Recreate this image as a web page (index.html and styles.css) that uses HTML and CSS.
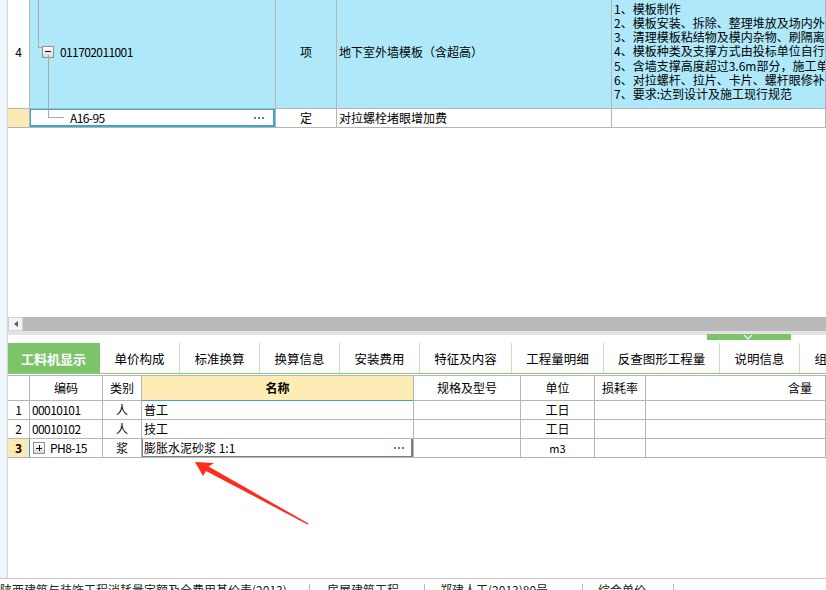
FILE: index.html
```html
<!DOCTYPE html>
<html lang="zh-CN">
<head>
<meta charset="utf-8">
<title>工料机显示</title>
<link rel="stylesheet" href="styles.css">
</head>
<body>
<div class="app">
  <div class="main">
    <div class="side"></div>
    <div class="content">
      <div class="top-pane">
        <div class="grid-top">
          <div class="trow r-main">
            <div class="cell num">4</div>
            <div class="cell code">
              <span class="tree-up"></span>
              <span class="toggle minus"></span>
              <span class="tree-down"></span>
              <span class="codetext">011702011001</span>
            </div>
            <div class="cell center">项</div>
            <div class="cell name">地下室外墙模板（含超高）</div>
            <div class="cell desc">
              <div class="desc-lines">
                <div>1、模板制作</div>
                <div>2、模板安装、拆除、整理堆放及场内外运输</div>
                <div>3、清理模板粘结物及模内杂物、刷隔离剂等</div>
                <div>4、模板种类及支撑方式由投标单位自行确定</div>
                <div>5、含墙支撑高度超过3.6m部分，施工单位自行考虑</div>
                <div>6、对拉螺杆、拉片、卡片、螺杆眼修补等</div>
                <div>7、要求:达到设计及施工现行规范</div>
              </div>
            </div>
          </div>
          <div class="trow r-sub">
            <div class="cell num hl"></div>
            <div class="cell code sel">
              <span class="tree-elbow"></span>
              <span class="codetext">A16-95</span>
              <svg class="more" width="12" height="3" viewBox="0 0 12 3"><rect x="0" y="0" width="2" height="2"/><rect x="4" y="0" width="2" height="2"/><rect x="8" y="0" width="2" height="2"/></svg>
            </div>
            <div class="cell center">定</div>
            <div class="cell name">对拉螺栓堵眼增加费</div>
            <div class="cell desc"></div>
          </div>
        </div>
      </div>

      <div class="hscroll">
        <div class="sbtn"><span class="tri"></span></div>
        <div class="sthumb"></div>
      </div>

      <div class="split">
        <div class="handle">
          <svg width="10" height="6" viewBox="0 0 10 6"><polyline points="1,1 5,5 9,1" fill="none" stroke="#fff" stroke-width="1.2"/></svg>
        </div>
      </div>

      <div class="tabs">
        <div class="tab active w92">工料机显示</div>
        <div class="tab w80">单价构成</div>
        <div class="tab w80">标准换算</div>
        <div class="tab w80">换算信息</div>
        <div class="tab w80">安装费用</div>
        <div class="tab w92">特征及内容</div>
        <div class="tab w92">工程量明细</div>
        <div class="tab w116">反查图形工程量</div>
        <div class="tab w80">说明信息</div>
        <div class="tab w80">组价方案</div>
      </div>

      <div class="grid-bot">
        <div class="brow head">
          <div class="cell"></div>
          <div class="cell center">编码</div>
          <div class="cell center">类别</div>
          <div class="cell center hname">名称</div>
          <div class="cell center">规格及型号</div>
          <div class="cell center">单位</div>
          <div class="cell center">损耗率</div>
          <div class="cell right">含量</div>
        </div>
        <div class="brow">
          <div class="cell center">1</div>
          <div class="cell lcode"><span class="codetext">00010101</span></div>
          <div class="cell center">人</div>
          <div class="cell lname">普工</div>
          <div class="cell"></div>
          <div class="cell center">工日</div>
          <div class="cell"></div>
          <div class="cell"></div>
        </div>
        <div class="brow">
          <div class="cell center">2</div>
          <div class="cell lcode"><span class="codetext">00010102</span></div>
          <div class="cell center">人</div>
          <div class="cell lname">技工</div>
          <div class="cell"></div>
          <div class="cell center">工日</div>
          <div class="cell"></div>
          <div class="cell"></div>
        </div>
        <div class="brow cur">
          <div class="cell center curnum">3</div>
          <div class="cell lcode"><span class="toggle plus"></span><span class="codetext">PH8-15</span></div>
          <div class="cell center">浆</div>
          <div class="cell lname edit">膨胀水泥砂浆 1:1<svg class="more" width="12" height="3" viewBox="0 0 12 3"><rect x="0" y="0" width="2" height="2"/><rect x="4" y="0" width="2" height="2"/><rect x="8" y="0" width="2" height="2"/></svg></div>
          <div class="cell"></div>
          <div class="cell center small">m3</div>
          <div class="cell"></div>
          <div class="cell"></div>
        </div>
      </div>
    </div>
  </div>

  <div class="status">
    <div class="sitem s1">陕西建筑与装饰工程消耗量定额及全费用基价表(2013)</div>
    <div class="sitem s2">房屋建筑工程</div>
    <div class="sitem s3">郑建人工(2013)80号</div>
    <div class="sitem s4">综合单价</div>
    <div class="sitem s5"></div>
  </div>
</div>

<svg class="arrow" width="826" height="590" viewBox="0 0 826 590">
  <polygon points="195,462 214,463 208.5,466.5 308.5,523.5 307.5,524.5 206,471 203,476" fill="#ff2b1c"/>
</svg>
</body>
</html>
```

FILE: styles.css
```css
* { box-sizing: border-box; }
html, body { margin: 0; padding: 0; }
body {
  width: 826px;
  height: 590px;
  overflow: hidden;
  background: #fff;
  font-family: "Noto Sans CJK SC", "Noto Sans", sans-serif;
  font-size: 12px;
  color: #000;
  position: relative;
}
.app { display: flex; flex-direction: column; height: 590px; }
.main { flex: 1; display: flex; min-height: 0; }
.side {
  width: 8px;
  flex: none;
  background: #eff7fb;
  border-right: 1px solid #d6d6d6;
}
.content {
  flex: 1;
  min-width: 0;
  display: flex;
  flex-direction: column;
  position: relative;
  overflow: hidden;
}

/* generic cells */
.cell {
  border-right: 1px solid #b5b5b5;
  border-bottom: 1px solid #b5b5b5;
  display: flex;
  align-items: center;
  white-space: nowrap;
  overflow: hidden;
  line-height: 14px;
}
.center { justify-content: center; }
.right { justify-content: flex-end; padding-right: 13px; }
.codetext { letter-spacing: -0.6px; }

/* top grid */
.top-pane { height: 317px; flex: none; overflow: hidden; }
.grid-top { margin-top: -5px; }
.trow {
  display: grid;
  grid-template-columns: 22px 246px 61px 275px 1fr;
}
.r-main { height: 114px; }
.r-main .cell { background: #aee8f9; }
.r-main .cell.num { background: #fff; }
.r-sub { height: 19px; }
.num { justify-content: center; }
.hl { background: #fde9b3; }
.name { padding-left: 2px; }
.desc { padding-left: 2px; align-items: center; }
.desc-lines { line-height: 14.2px; }

.code { position: relative; padding-left: 12px; }
.r-main .code .codetext { margin-left: 6px; }
.tree-up {
  position: absolute;
  left: 8px; top: 0;
  width: 1px; height: 53px;
  background: #a9a9a9;
}
.tree-up::after {
  content: "";
  position: absolute;
  left: 0; bottom: 0;
  width: 4px; height: 1px;
  background: #a9a9a9;
}
.tree-down {
  position: absolute;
  left: 18px; top: 60px; bottom: 0;
  width: 1px;
  background: #a9a9a9;
}
.toggle {
  position: relative;
  display: inline-block;
  flex: none;
  width: 12px; height: 12px;
  border: 1px solid #8f8f8f;
  background: linear-gradient(#ffffff, #d9d9d9);
}
.toggle::before {
  content: "";
  position: absolute;
  left: 2px; top: 4.5px;
  width: 6px; height: 1px;
  background: #111;
}
.plus::after {
  content: "";
  position: absolute;
  left: 4.5px; top: 2px;
  width: 1px; height: 6px;
  background: #111;
}
.sel { padding-left: 40px; }
.sel::after {
  content: "";
  position: absolute;
  left: -1px; top: -1px; right: 0; bottom: 0;
  border: 2px solid #3aa6d8;
}
.tree-elbow {
  position: absolute;
  left: 18px; top: 0;
  width: 16px; height: 9px;
  border-left: 1px solid #a9a9a9;
  border-bottom: 1px solid #a9a9a9;
}
.more { fill: #3a86d0; flex: none; margin-left: auto; }
.sel .more { margin-right: 9px; }

/* scrollbar */
.hscroll { height: 14px; flex: none; display: flex; }
.sbtn {
  width: 15px;
  background: #f4f4f4;
  border: 1px solid #d0d0d0;
  display: flex;
  align-items: center;
  justify-content: center;
}
.tri {
  width: 0; height: 0;
  border-top: 3.5px solid transparent;
  border-bottom: 3.5px solid transparent;
  border-right: 4px solid #5a5a66;
}
.sthumb { flex: 1; background: #b9b9b9; }

.split {
  height: 12px;
  flex: none;
  border-top: 4px solid #e3e3e3;
  position: relative;
}
.handle {
  position: absolute;
  left: 699px; top: -1px;
  width: 84px; height: 6px;
  background: #7dc36a;
  display: flex;
  justify-content: center;
  align-items: flex-start;
}
.handle svg { margin-left: -2px; }

/* tabs */
.tabs {
  height: 31px;
  flex: none;
  display: flex;
  border-bottom: 1px solid #8ccd78;
  margin-bottom: 1px;
}
.tab {
  flex: none;
  display: flex;
  align-items: center;
  justify-content: center;
  border-right: 1px solid #c3e5b5;
  font-size: 12.5px;
  white-space: nowrap;
}
.tab.active {
  background: #7dc36a;
  border-right-color: #7dc36a;
  color: #fff;
  font-weight: bold;
  font-size: 13px;
}
.w92 { width: 92px; }
.w80 { width: 80px; }
.w116 { width: 116px; }

/* bottom grid */
.grid-bot { border-top: 1px solid #b5b5b5; }
.brow {
  display: grid;
  grid-template-columns: 22px 73px 39px 272px 107px 74px 51px 1fr;
  height: 19px;
}
.brow.head { height: 25px; }
.hname {
  background: #feecb5;
  font-weight: bold;
  border-bottom-color: #3aa6d8;
}
.lcode { padding-left: 2px; }
.lname { padding-left: 2px; position: relative; }
.cur .lcode { padding-left: 3px; }
.cur .lcode .codetext { margin-left: 5px; }
.curnum {
  background: #fde9b3;
  font-weight: bold;
  border-right-color: #3aa6d8;
}
.edit::after {
  content: "";
  position: absolute;
  left: -1px; top: 0; right: 0; bottom: -1px;
  border: 2px solid #7f7f7f;
  border-top: none;
}
.edit .more { margin-right: 7px; }
.small { font-size: 11px; }

/* status bar */
.status {
  height: 12px;
  flex: none;
  border-top: 1px solid #c6c6c6;
  display: flex;
  overflow: hidden;
  color: #222;
}
.sitem {
  margin-top: 5px;
  height: 20px;
  line-height: 12px;
  white-space: nowrap;
  overflow: hidden;
  border-right: 1px solid #b8b8b8;
  flex: none;
}
.s1 { width: 310px; }
.s2 { width: 115px; padding-left: 17px; }
.s3 { width: 158px; padding-left: 15px; }
.s4 { width: 91px; padding-left: 15px; }
.s5 { flex: 1; border-right: none; }

.arrow { position: absolute; left: 0; top: 0; pointer-events: none; }
```
